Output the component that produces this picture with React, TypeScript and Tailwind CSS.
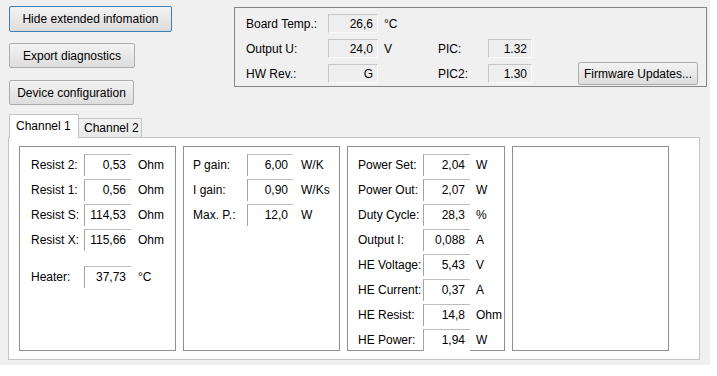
import React from "react";

type Row = { label: string; value: string; unit: string };

const heaterRows: Row[] = [
  { label: "Resist 2:", value: "0,53", unit: "Ohm" },
  { label: "Resist 1:", value: "0,56", unit: "Ohm" },
  { label: "Resist S:", value: "114,53", unit: "Ohm" },
  { label: "Resist X:", value: "115,66", unit: "Ohm" },
];

const gainRows: Row[] = [
  { label: "P gain:", value: "6,00", unit: "W/K" },
  { label: "I gain:", value: "0,90", unit: "W/Ks" },
  { label: "Max. P.:", value: "12,0", unit: "W" },
];

const powerRows: Row[] = [
  { label: "Power Set:", value: "2,04", unit: "W" },
  { label: "Power Out:", value: "2,07", unit: "W" },
  { label: "Duty Cycle:", value: "28,3", unit: "%" },
  { label: "Output I:", value: "0,088", unit: "A" },
  { label: "HE Voltage:", value: "5,43", unit: "V" },
  { label: "HE Current:", value: "0,37", unit: "A" },
  { label: "HE Resist:", value: "14,8", unit: "Ohm" },
  { label: "HE Power:", value: "1,94", unit: "W" },
];

function Button({ children, className = "" }: { children: React.ReactNode; className?: string }) {
  return (
    <button
      className={`flex items-center justify-center rounded-[2px] border bg-linear-to-b from-[#f3f3f3] to-[#dddddd] text-[12px] leading-none text-black ${className}`}
    >
      {children}
    </button>
  );
}

function InfoBox({ value }: { value: string }) {
  return (
    <div className="flex h-[19px] items-center justify-end border border-t-[#c6c6c6] border-l-[#c6c6c6] border-b-[#fbfbfb] border-r-[#fbfbfb] bg-[#eeeeee] pr-[4px]">
      {value}
    </div>
  );
}

function FieldRow({ row, labelW, boxW, unitPl }: { row: Row; labelW: string; boxW: string; unitPl: string }) {
  return (
    <div className="flex h-[25px] items-center">
      <span className={labelW}>{row.label}</span>
      <div
        className={`flex h-[22px] items-center justify-end border-t border-l border-t-[#bdbdbd] border-l-[#a3a3a3] bg-white pr-[5px] ${boxW}`}
      >
        {row.value}
      </div>
      <span className={unitPl}>{row.unit}</span>
    </div>
  );
}

function Panel({ children, className = "" }: { children?: React.ReactNode; className?: string }) {
  return <div className={`h-[205px] border border-[#8f8f8f] bg-white ${className}`}>{children}</div>;
}

export default function App() {
  return (
    <div className="h-[376px] w-[717px] overflow-hidden bg-white font-['Liberation_Sans',Arial,sans-serif] text-[12px] text-black">
      <div className="h-[365px] w-[710px] bg-[#f0f0f0] pt-[6px]">
        <div className="flex items-start">
          <div className="flex flex-col pl-[9px]">
            <Button className="h-[26px] w-[163px] border-[#3c7fb1]">Hide extended infomation</Button>
            <Button className="mt-[11px] h-[25px] w-[126px] border-[#acacac]">Export diagnostics</Button>
            <Button className="mt-[12px] h-[25px] w-[125px] border-[#acacac]">Device configuration</Button>
          </div>

          <div className="ml-auto mr-[3px] mt-[1px] h-[80px] w-[473px] border border-[#858585] pl-[11px] pt-[3px]">
            <div className="grid grid-cols-[82px_50px_60px_50px_44px_46px_120px] grid-rows-[25px_25px_25px] items-center">
              <span>Board Temp.:</span>
              <InfoBox value="26,6" />
              <span className="pl-[6px]">°C</span>
              <span />
              <span />
              <span />
              <span />

              <span>Output U:</span>
              <InfoBox value="24,0" />
              <span className="pl-[6px]">V</span>
              <span>PIC:</span>
              <InfoBox value="1.32" />
              <span />
              <span />

              <span>HW Rev.:</span>
              <InfoBox value="G" />
              <span />
              <span>PIC2:</span>
              <InfoBox value="1.30" />
              <span />
              <Button className="h-[23px] w-[120px] border-[#acacac]">Firmware Updates...</Button>
            </div>
          </div>
        </div>

        <div className="mx-[8px] mt-[9px] w-[692px]">
          <div className="flex h-[24px] items-end pl-px">
            <div className="relative z-10 h-[24px] w-[70px] border border-b-0 border-[#c4c4c4] bg-white pl-[6px] pt-[3px] leading-[16px]">
              Channel 1
            </div>
            <div className="mb-px h-[19px] w-[63px] border border-b-0 border-l-0 border-[#c4c4c4] bg-linear-to-b from-[#f3f3f3] to-[#e8e8e8] pl-[5px] pt-[1px] leading-[16px]">
              Channel 2
            </div>
          </div>
          <div className="-mt-px h-[223px] border border-[#c4c4c4] bg-white pl-[10px] pt-[8px]">
            <div className="flex gap-[7px]">
              <Panel className="w-[157px] pl-[11px] pt-[5px]">
                {heaterRows.map((r) => (
                  <FieldRow key={r.label} row={r} labelW="w-[53px]" boxW="w-[47px]" unitPl="pl-[7px]" />
                ))}
                <div className="mt-[12px]">
                  <FieldRow
                    row={{ label: "Heater:", value: "37,73", unit: "°C" }}
                    labelW="w-[53px]"
                    boxW="w-[47px]"
                    unitPl="pl-[7px]"
                  />
                </div>
              </Panel>
              <Panel className="w-[157px] pl-[9px] pt-[5px]">
                {gainRows.map((r) => (
                  <FieldRow key={r.label} row={r} labelW="w-[54px]" boxW="w-[46px]" unitPl="pl-[8px]" />
                ))}
              </Panel>
              <Panel className="w-[158px] pl-[10px] pt-[5px]">
                {powerRows.map((r) => (
                  <FieldRow key={r.label} row={r} labelW="w-[65px]" boxW="w-[47px]" unitPl="pl-[6px]" />
                ))}
              </Panel>
              <Panel className="w-[157px]" />
            </div>
          </div>
        </div>
      </div>
    </div>
  );
}
